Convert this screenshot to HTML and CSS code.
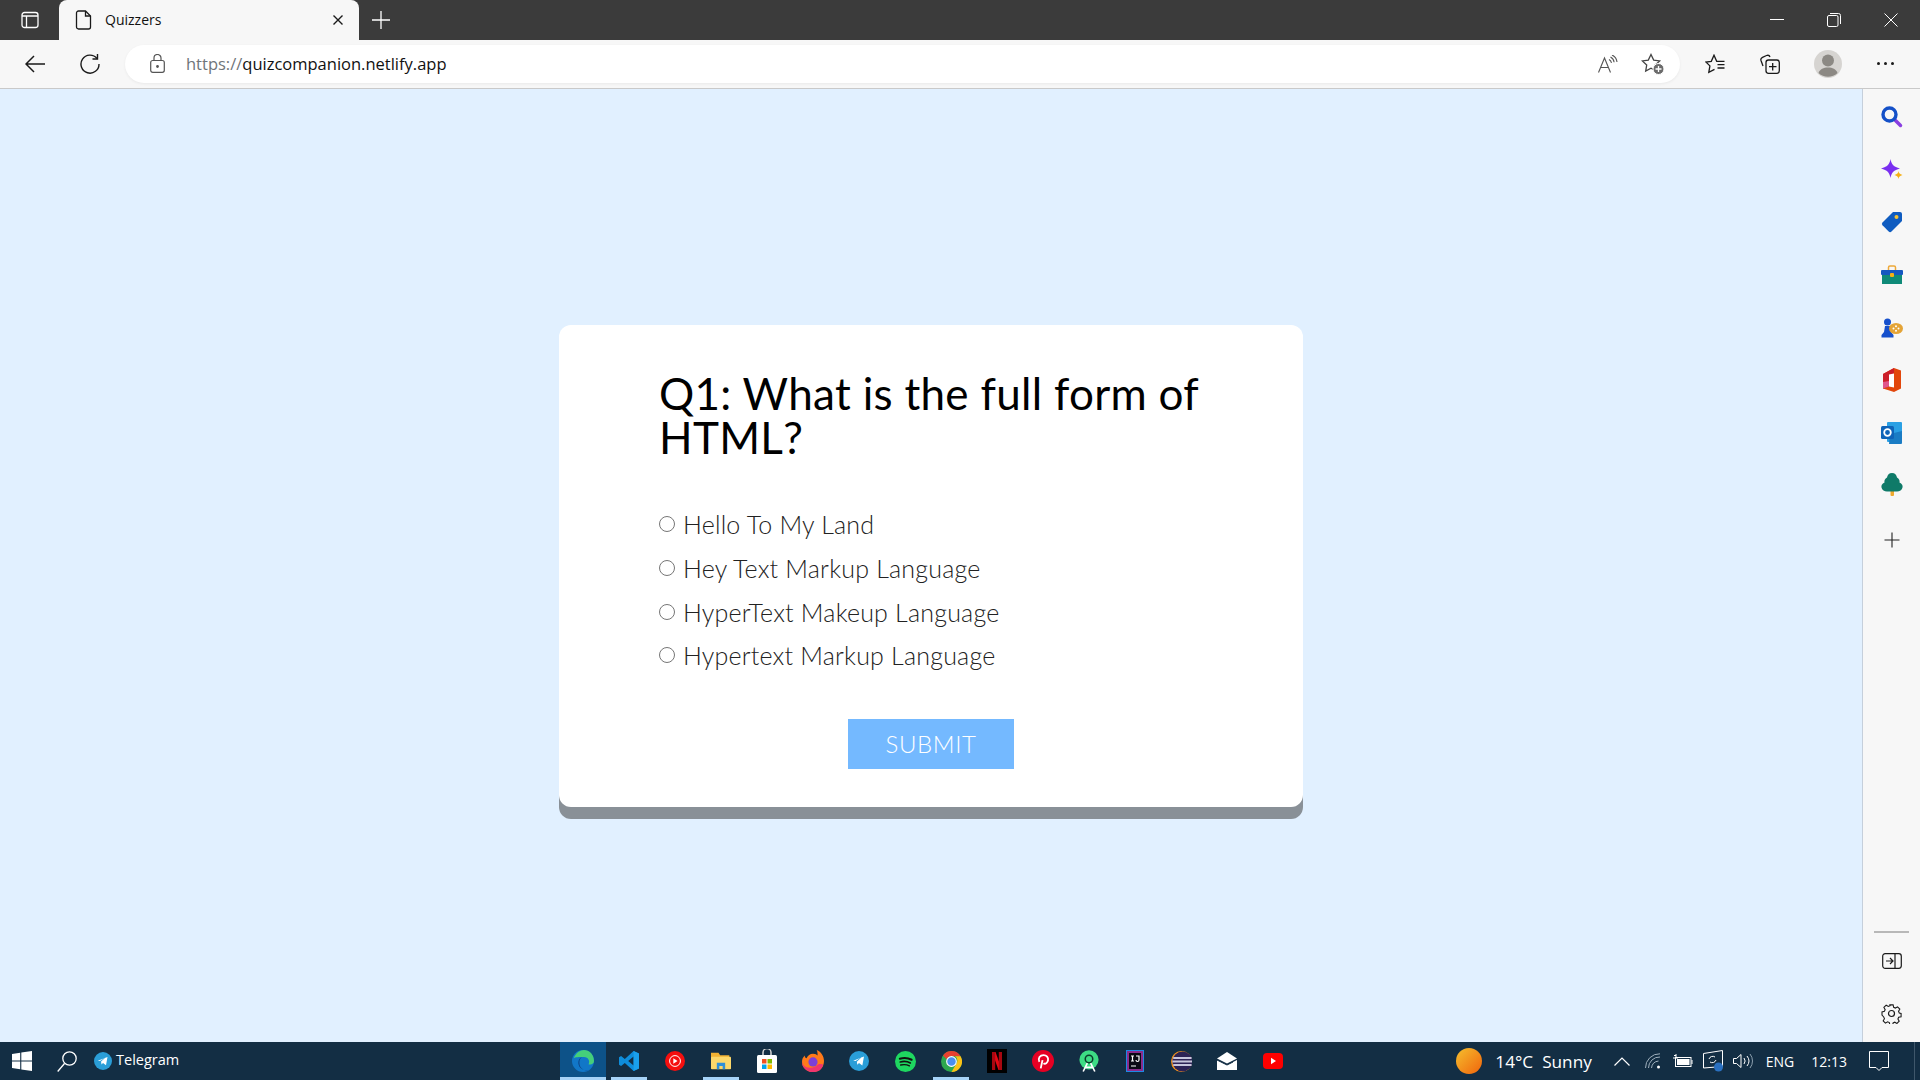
FILE: index.html
```html
<!DOCTYPE html>
<html lang="en">
<head>
  <meta charset="UTF-8" />
  <title>Quizzers</title>
  <link rel="stylesheet" href="styles.css">
</head>
<body>
  <!-- tab strip -->
  <div class="tabstrip">
    <svg class="tabs-btn" width="18" height="18" viewBox="0 0 18 18" fill="none" stroke="#fff" stroke-width="1.3"><rect x="1" y="1.5" width="16" height="15" rx="2.5"/><path d="M1 5h16M5.5 5v11.5"/></svg>
    <div class="tab">
      <svg width="18" height="20" viewBox="0 0 18 20" fill="none" stroke="#1a1a1a" stroke-width="1.3"><path d="M3.5 1h7l5 5v11a2 2 0 0 1-2 2h-10a2 2 0 0 1-2-2V3a2 2 0 0 1 2-2z"/><path d="M10.5 1v5h5"/></svg>
      <span class="tab-title">Quizzers</span>
      <svg class="tab-close" width="12" height="12" viewBox="0 0 12 12" stroke="#1a1a1a" stroke-width="1.4"><path d="M1.5 1.5l9 9M10.5 1.5l-9 9"/></svg>
    </div>
    <svg class="new-tab" width="18" height="18" viewBox="0 0 18 18" stroke="#fff" stroke-width="1.3"><path d="M9 0v18M0 9h18"/></svg>
    <div class="win-controls">
      <svg width="14" height="14" viewBox="0 0 14 14" stroke="#fff" stroke-width="1"><path d="M0 6.500h14"/></svg>
      <svg width="14" height="14" viewBox="0 0 14 14" fill="none" stroke="#fff" stroke-width="1"><rect x=".5" y="2.5" width="10.5" height="11" rx="1.5"/><path d="M3 .5h8.5a2 2 0 0 1 2 2V11"/></svg>
      <svg width="14" height="14" viewBox="0 0 14 14" stroke="#fff" stroke-width="1"><path d="M.5.5l13 13M13.5.5l-13 13"/></svg>
    </div>
  </div>

  <!-- toolbar -->
  <div class="toolbar">
    <svg class="tb-back" width="20" height="18" viewBox="0 0 20 18" fill="none" stroke="#1a1a1a" stroke-width="1.5"><path d="M20 9H1.2M9 1L1 9l8 8"/></svg>
    <svg class="tb-reload" width="20" height="20" viewBox="0 0 20 20" fill="none" stroke="#1a1a1a" stroke-width="1.4"><path d="M17 4.5A9 9 0 1 0 19 10"/><path d="M17.5 0v5h-5"/></svg>
    <div class="address">
      <svg class="lock" width="15" height="19" viewBox="0 0 15 19" fill="none" stroke="#555" stroke-width="1.2"><rect x=".7" y="6.5" width="13.6" height="11.8" rx="2"/><path d="M4 6.5V4a3.5 3.5 0 0 1 7 0v2.5"/><circle cx="7.5" cy="12.5" r=".8" fill="#555"/></svg>
      <span class="url"><span class="url-scheme">https://</span>quizcompanion.netlify.app</span>
      <svg class="read-aloud" width="20" height="18" viewBox="0 0 20 18" fill="none" stroke="#555" stroke-width="1.1"><path d="M.5 17.500L6.500 3l6 14.500M2.500 12.500h8"/><path d="M11 4.500c1.400.7 2.200 1.800 2.500 3.300M12.500 2c2 1 3.300 2.800 3.600 5.300M14 0c2.800 1.300 4.600 3.800 5 7"/></svg>
      <svg class="fav-add" width="24" height="22" viewBox="0 0 24 22" fill="none" stroke="#444" stroke-width="1.3"><path d="M10 1.500l2.700 5.600 6 .8-4.400 4.200 1 6-5.300-2.900-5.300 2.900 1-6L1.300 7.900l6-.8z"/><circle cx="17.500" cy="16" r="5.500" fill="#6b6b6b" stroke="#fff" stroke-width="1"/><path d="M17.500 13v6M14.500 16h6" stroke="#fff"/></svg>
    </div>
    <svg class="tb-favs" width="20" height="20" viewBox="0 0 20 20" fill="none" stroke="#1a1a1a" stroke-width="1.3"><path d="M19.500 7.300H11.700L9 1.200 6.300 7.300.9 8l4 3.900-1.100 6.400L9.500 15.300"/><path d="M12.500 10.700h7M12.500 14h7"/></svg>
    <svg class="tb-coll" width="20" height="20" viewBox="0 0 20 20" fill="none" stroke="#1a1a1a" stroke-width="1.3"><path d="M3 12L1 6.500C.5 5 1 4 2.500 3.300L6.500 1.500C8 1 9.500 1.500 10 3"/><rect x="6" y="6" width="13.300" height="13.300" rx="2.500"/><path d="M12.700 9v7.500M9 12.700h7.500"/></svg>
    <svg class="tb-avatar" width="28" height="28" viewBox="0 0 28 28"><circle cx="14" cy="14" r="14" fill="#d6d4d1"/><circle cx="14" cy="10.500" r="6" fill="#8c8984"/><path d="M4.500 23c1.500-4 5-5.500 9.500-5.500s8 1.500 9.500 5.500a14 14 0 0 1-19 0z" fill="#8c8984"/></svg>
    <div class="tb-dots"><i></i><i></i><i></i></div>
  </div>

  <div class="middle">
    <main class="page">
      <div class="quiz-card">
        <div class="quiz-text">
          <h2 class="question">Q1: What is the full form of HTML?</h2>
          <ul class="answers">
            <li><label class="answer"><input type="radio" name="answer" />Hello To My Land</label></li>
            <li><label class="answer"><input type="radio" name="answer" />Hey Text Markup Language</label></li>
            <li><label class="answer"><input type="radio" name="answer" />HyperText Makeup Language</label></li>
            <li><label class="answer"><input type="radio" name="answer" />Hypertext Markup Language</label></li>
          </ul>
        </div>
        <button class="submit">SUBMIT</button>
      </div>
    </main>

    <!-- edge sidebar -->
    <aside class="sidebar">
      <div class="sb-apps">
        <svg width="22" height="22" viewBox="0 0 22 22" fill="none"><path d="M13.500 13.500l6 6" stroke="#8a3fe0" stroke-width="3.500" stroke-linecap="round"/><circle cx="8.500" cy="8.500" r="6.500" stroke="#1450c8" stroke-width="3.400"/></svg>
        <svg width="22" height="22" viewBox="0 0 22 22"><path d="M9.500 0c1 5.500 3.200 7.800 9.500 9.500-6.300 1.700-8.500 4-9.500 9.500C8.500 13.500 6.300 11.200 0 9.500 6.300 7.800 8.500 5.500 9.500 0z" fill="#7a2ff0"/><path d="M17.500 12c.4 2.300 1.200 3.200 4 4-2.800.8-3.600 1.700-4 4-.4-2.300-1.200-3.200-4-4 2.800-.8 3.600-1.700 4-4z" fill="#f5b015"/></svg>
        <svg width="22" height="22" viewBox="0 0 22 22"><path d="M12 1h7a2 2 0 0 1 2 2v7L10.500 20.500a2 2 0 0 1-2.800 0L1.500 14.300a2 2 0 0 1 0-2.800z" fill="#0f5cc0"/><circle cx="15.500" cy="6" r="2" fill="#f7c331"/></svg>
        <svg width="22" height="20" viewBox="0 0 22 20"><path d="M7.500 5V2.500A1.500 1.500 0 0 1 9 1h4a1.500 1.500 0 0 1 1.500 1.500V5" fill="none" stroke="#eda93a" stroke-width="1.500"/><rect x="1" y="9" width="20" height="10" fill="#0f8a78"/><rect y="5" width="22" height="5" rx="1" fill="#1558c0"/><rect x="9" y="8" width="4" height="4" rx="1" fill="#f5b015"/></svg>
        <svg width="22" height="20" viewBox="0 0 22 20"><circle cx="6.500" cy="4" r="3.500" fill="#1650cc"/><path d="M4 8h5l1 6 2.500 3v2.500H.5V17L3 14z" fill="#1650cc"/><ellipse cx="15" cy="10.500" rx="7" ry="5.500" fill="#e4a437"/><circle cx="12.500" cy="10.500" r="1" fill="#fff"/><circle cx="15" cy="8.300" r="1" fill="#fff"/><circle cx="17.500" cy="10.500" r="1" fill="#fff"/><circle cx="15" cy="12.700" r="1" fill="#fff"/></svg>
        <svg width="20" height="24" viewBox="0 0 20 24"><path d="M12 0l7 2.500v18L12 24l-11-3.500V6z" fill="#e2470c"/><path d="M12 0L1 6v14.500l6-2V7l5-1.500z" fill="#cc1f2a"/><path d="M1 14l6-1v5.500l-6 2z" fill="#e0568c"/><path d="M7 6.500l5-1v14l-5-1z" fill="#fff"/></svg>
        <svg width="22" height="22" viewBox="0 0 22 22"><rect x="6" y="0" width="15" height="20" rx="1" fill="#2aa0e4"/><path d="M9 12l12-3v12a1 1 0 0 1-1 1H8z" fill="#1a7cc4"/><rect y="4" width="13" height="13" rx="1.500" fill="#0f64b8"/><circle cx="6.500" cy="10.500" r="3.300" fill="none" stroke="#fff" stroke-width="1.800"/></svg>
        <svg width="22" height="24" viewBox="0 0 22 24"><rect x="9.500" y="17" width="3.500" height="6" rx="1" fill="#f0a92e"/><path d="M11 0c3 0 4.500 2 5 4.500 2 1 3 3 2.500 5 2.500 1 3.500 3 3 5-.5 2.500-3 4-5.500 4H6c-2.500 0-5-1.500-5.500-4-.5-2 .5-4 3-5C3 7.500 4 5.500 6 4.500 6.500 2 8 0 11 0z" fill="#0f7a68"/></svg>
        <svg class="sb-plus" width="16" height="16" viewBox="0 0 16 16" stroke="#222" stroke-width="1.100"><path d="M8 .5v15M.5 8h15"/></svg>
      </div>
      <div class="sb-bottom">
        <div class="sb-rule"></div>
        <svg class="sb-panel" width="20" height="16" viewBox="0 0 20 16" fill="none" stroke="#1a1a1a" stroke-width="1.200"><rect x=".7" y=".7" width="18.600" height="14.600" rx="2.500"/><path d="M13 .7v14.600M4 8h6.500M8 5l3 3-3 3"/></svg>
        <svg class="sb-gear" width="21" height="21" viewBox="0 0 21 21" fill="none" stroke="#1a1a1a" stroke-width="1.200"><circle cx="10.500" cy="10.500" r="3"/><path d="M8.700 1h3.600l.6 2.700 1.900.8 2.400-1.400 2.500 2.500-1.400 2.400.8 1.900 2 .6v3.600l-2.700.6-.8 1.900 1.400 2.400-2.500 2.500-2.400-1.400-1.800.8-.6 2.300H8.700l-.6-2.700-1.900-.8-2.400 1.400-2.500-2.500 1.400-2.400-.8-1.900L0 12.300V8.700l2.700-.6.800-1.900-1.400-2.400 2.500-2.500 2.400 1.400 1.900-.8z" transform="translate(1 1) scale(.905)"/></svg>
      </div>
    </aside>
  </div>

  <!-- windows taskbar -->
  <footer class="taskbar">
    <svg class="start" width="20" height="20" viewBox="0 0 20 20" fill="#fff"><path d="M0 3l8.200-1.200v7.700H0zM9.300 1.600L20 0v9.500H9.300zM0 10.600h8.200v7.700L0 17zM9.300 10.600H20V20L9.300 18.500z"/></svg>
    <svg class="search" width="20" height="21" viewBox="0 0 20 21" fill="none" stroke="#fff" stroke-width="1.300"><circle cx="12.500" cy="7.500" r="6.700"/><path d="M7.500 12.500L.7 20.500"/></svg>
    <svg class="tg-pin" width="18" height="18" viewBox="0 0 24 24"><use href="#tg"/></svg>
    <span class="tg-label">Telegram</span>

    <div class="apps">
      <div class="app app-active">
        <svg width="22" height="22" viewBox="0 0 24 24"><circle cx="12" cy="12" r="12" fill="#1177c8"/><path d="M2 9C4 3 9 0 13 0c6 0 11 5 11 12 0 3-3 4.500-6 3.500 2-3 0-8-5-8-5 0-10 0-11 1.500z" fill="#45cf7a"/><path d="M11 8c-4 1-5 6-3 10 2 3 6 5 10 4-6 1-10-3-10-8 0-3 1-5 3-6z" fill="#0c3f80"/></svg>
      </div>
      <div class="app app-open">
        <svg width="20" height="22" viewBox="0 0 24 24"><path d="M17.500 0L24 3v18l-6.500 3L7 14.500 2.500 18 0 16.500V7.500L2.500 6 7 9.500zM17.500 6.500L11 12l6.500 5.500z" fill="#0e8ddb"/><path d="M17.500 0L24 3v18l-6.500 3z" fill="#1aa0ec"/></svg>
      </div>
      <div class="app">
        <svg width="20" height="20" viewBox="0 0 24 24"><circle cx="12" cy="12" r="12" fill="#f50f0f"/><circle cx="12" cy="12" r="6.500" fill="none" stroke="#fff" stroke-width="1.200"/><path d="M10 8.800v6.400l5-3.200z" fill="#fff"/></svg>
      </div>
      <div class="app app-open">
        <svg width="20" height="20" viewBox="0 0 24 24"><path d="M0 2h9l2 3h11v4H0z" fill="#f2b233"/><rect y="7" width="24" height="15" rx="1" fill="#fbd76a"/><path d="M7 14h10v8h-3v-4h-4v4H7z" fill="#2e8fd8"/></svg>
      </div>
      <div class="app">
        <svg width="20" height="24" viewBox="0 0 20 24"><path d="M6 7V3.500a4 4 0 0 1 8 0V7" fill="none" stroke="#d8d8d8" stroke-width="1.500"/><rect y="6" width="20" height="18" rx="1.500" fill="#fff"/><rect x="5" y="10" width="4.500" height="4.500" fill="#f25022"/><rect x="10.500" y="10" width="4.500" height="4.500" fill="#7fba00"/><rect x="5" y="15.500" width="4.500" height="4.500" fill="#00a4ef"/><rect x="10.500" y="15.500" width="4.500" height="4.500" fill="#ffb900"/></svg>
      </div>
      <div class="app">
        <svg width="22" height="24" viewBox="0 0 24 24"><path d="M12 24C5 24 0 19 0 13c0-3 1-5 3-7 0 2 1 3 2 3 1-3 4-5 7-5 3 0 4 1 5 2 0-2 0-4-1-6 5 2 8 7 8 12 0 7-5 12-12 12z" fill="#ff7a1a"/><path d="M12 24C5 24 0 19 0 13c1 4 4 6 7 6 3 1 7 0 9-2 3-3 7-1 7-1-1 5-5 8-11 8z" fill="#f0356e"/><circle cx="12" cy="13" r="5" fill="#7d3fd8"/></svg>
      </div>
      <div class="app">
        <svg width="20" height="20" viewBox="0 0 24 24"><symbol id="tg" viewBox="0 0 24 24"><circle cx="12" cy="12" r="12" fill="#2a9ed8"/><path d="M5 11.800L18 6.500l-2 11-4-3-2 2-.6-3.700 6-5.500-7.500 4.700z" fill="#fff"/></symbol><use href="#tg"/></svg>
      </div>
      <div class="app">
        <svg width="21" height="21" viewBox="0 0 24 24" fill="none" stroke="#111" stroke-linecap="round"><circle cx="12" cy="12" r="12" fill="#1ed760" stroke="none"/><path d="M5.500 8.800c4.500-1.300 9.500-1 13.500 1.200" stroke-width="2.300"/><path d="M6 12.500c4-1 8-.8 11.500 1.200" stroke-width="1.900"/><path d="M6.500 16c3.500-.8 7-.6 10 1" stroke-width="1.500"/></svg>
      </div>
      <div class="app app-open">
        <svg width="21" height="21" viewBox="0 0 24 24"><circle cx="12" cy="12" r="12" fill="#2da84f"/><path d="M12 0a12 12 0 0 1 10.400 6H12a6 6 0 0 0-5.500 3.500L2.300 5A12 12 0 0 1 12 0z" fill="#e8412f"/><path d="M22.400 6A12 12 0 0 1 12 24l5.200-9A6 6 0 0 0 16 6z" fill="#fbc116"/><circle cx="12" cy="12" r="5.500" fill="#4a8ef0" stroke="#fff" stroke-width="1.300"/></svg>
      </div>
      <div class="app">
        <svg width="20" height="24" viewBox="0 0 20 24"><rect width="20" height="24" fill="#000"/><path d="M5 3h3.500l6.500 18h-3.500z" fill="#e50914"/><path d="M5 3h3.200v18H5zM11.800 3H15v18h-3.200z" fill="#a80710"/></svg>
      </div>
      <div class="app">
        <svg width="22" height="22" viewBox="0 0 24 24"><circle cx="12" cy="12" r="12" fill="#e60023"/><path d="M9.500 20l2-9M8 13c-2-4 1-7.500 4.500-7.500 3.500 0 5.500 2.500 5 5.500-.5 3-3 5-5 3.500" fill="none" stroke="#fff" stroke-width="2"/></svg>
      </div>
      <div class="app">
        <svg width="20" height="23" viewBox="0 0 24 26" fill="none"><circle cx="12" cy="11" r="11.500" fill="#3ddc84"/><circle cx="12" cy="10" r="4.500" stroke="#0b3d2c" stroke-width="1.800"/><path d="M10 15L5 25M14 15l5 10M7 20h10" stroke="#fff" stroke-width="2"/></svg>
      </div>
      <div class="app">
        <svg width="18" height="22" viewBox="0 0 18 22"><rect width="18" height="22" fill="#1e88e5"/><rect x="1" y="1" width="16" height="20" fill="#8a2c8c"/><rect x="3" y="3" width="12" height="16" fill="#0a0a14"/><path d="M5 6h3M6.500 6v5M5 11h3M10 6h3v4a1.500 1.500 0 0 1-3 0M5 16h5" fill="none" stroke="#fff" stroke-width="1.200"/></svg>
      </div>
      <div class="app">
        <svg width="21" height="21" viewBox="0 0 24 24"><circle cx="12" cy="12" r="12" fill="#f7941e"/><circle cx="13" cy="12" r="11.500" fill="#2c2255"/><path d="M2.500 8h21M1.500 12h23M2.500 16h21" stroke="#c7c5dc" stroke-width="2.500"/></svg>
      </div>
      <div class="app">
        <svg width="20" height="18" viewBox="0 0 20 18"><path d="M0 6.500L10 0l10 6.500-10 5z" fill="#fff"/><path d="M0 8l10 5 10-5v10H0z" fill="#fff"/><path d="M0 8l10 5 6-3" fill="none" stroke="#132e44" stroke-width="1"/></svg>
      </div>
      <div class="app">
        <svg width="20" height="16" viewBox="0 0 20 16"><rect width="20" height="16" rx="4" fill="#f00"/><path d="M8 4.800v6.400l5-3.200z" fill="#fff"/></svg>
      </div>
    </div>

    <div class="tray">
      <svg class="sun" width="26" height="26" viewBox="0 0 26 26"><defs><linearGradient id="sunFill" x1="0" y1="0" x2="1" y2="1"><stop offset="0" stop-color="#f5bf2e"/><stop offset="1" stop-color="#f0640c"/></linearGradient></defs><circle cx="13" cy="13" r="13" fill="url(#sunFill)"/></svg>
      <span class="weather">14°C&nbsp; Sunny</span>
      <svg class="tray-chevron" width="16" height="9" viewBox="0 0 16 9" fill="none" stroke="#fff" stroke-width="1.200"><path d="M.5 8.500L8 1l7.500 7.500"/></svg>
      <svg class="tray-wifi" width="16" height="16" viewBox="0 0 16 16" fill="none" stroke="#9fb0bd" stroke-width="1"><path d="M.5 15A14 14 0 0 1 15 .8M3.500 15A11 11 0 0 1 15 4M6.500 15a8 8 0 0 1 7-7"/><circle cx="13.500" cy="14" r="1.500" fill="#fff" stroke="none"/></svg>
      <svg class="tray-battery" width="20" height="14" viewBox="0 0 20 14" fill="none" stroke="#fff"><path d="M1 1.500h2M3 0v4M0 4h5M2.500 4v3"/><rect x="2.500" y="3.500" width="15.500" height="9"/><rect x="4" y="5" width="12.500" height="6" fill="#fff" stroke="none"/><path d="M19 6v4"/></svg>
      <svg class="tray-display" width="20" height="22" viewBox="0 0 20 22" fill="none" stroke="#fff"><path d="M.5 3.500L19.500.5v16L.5 18z"/><path d="M6 9a4 4 0 0 1 6-2M13 10a4 4 0 0 1-6 2" /><circle cx="15.500" cy="17" r="4.500" fill="#2a70c0" stroke="none"/></svg>
      <svg class="tray-speaker" width="20" height="16" viewBox="0 0 20 16" fill="none" stroke="#fff"><path d="M.5 5.500h3L8 1.500v13l-4.500-4h-3z"/><path d="M11 5a5 5 0 0 1 0 6"/><path d="M14 3a8 8 0 0 1 0 10" /><path d="M17 1a11 11 0 0 1 0 14" stroke="#8da0ae"/></svg>
      <span class="tray-text tray-lang">ENG</span>
      <span class="tray-text tray-time">12:13</span>
      <svg class="tray-notes" width="20" height="20" viewBox="0 0 20 20" fill="none" stroke="#fff"><path d="M.5.500h19v16h-6.500L10 19.500 7 16.500H.5z"/></svg>
      <div class="show-desktop"></div>
    </div>
  </footer>
</body>
</html>
```

FILE: styles.css
```css
* { box-sizing: border-box; }
html, body { height: 100%; }
body {
  margin: 0;
  display: flex;
  flex-direction: column;
  height: 100vh;
  overflow: hidden;
  font-family: "Open Sans", sans-serif;
  background: #e1f0ff;
}
svg { display: block; flex: none; }

/* tab strip */
.tabstrip {
  height: 40px;
  display: flex;
  align-items: center;
  background: #3b3b3b;
  flex: none;
}
.tabs-btn { margin: 0 20px 0 21px; }
.tab {
  width: 300px;
  height: 40px;
  display: flex;
  align-items: center;
  padding: 0 15px 0 16px;
  background: #f7f7f7;
  border-radius: 8px 8px 0 0;
}
.tab-title { margin-left: 12px; font-size: 14px; color: #111; padding-bottom: 2px; }
.tab-close { margin-left: auto; }
.new-tab { margin-left: 13px; }
.win-controls {
  margin-left: auto;
  display: flex;
  gap: 43px;
  padding-right: 22px;
}

/* toolbar */
.toolbar {
  height: 49px;
  padding-bottom: 1px;
  display: flex;
  align-items: center;
  background: #f7f7f7;
  border-bottom: 1px solid #c9c9c9;
  flex: none;
}
.tb-back { margin-left: 25px; }
.tb-reload { margin-left: 35px; }
.address {
  width: 1555px;
  height: 38px;
  margin-left: 25px;
  display: flex;
  align-items: center;
  padding-left: 25px;
  background: #fff;
  border-radius: 19px;
  box-shadow: 0 1px 3px rgba(0,0,0,0.06);
}
.url { margin-left: 21px; font-size: 16.5px; color: #111; }
.url-scheme { color: #70757a; }
.read-aloud { margin-left: auto; }
.fav-add { margin: 0 15px 0 23px; }
.tb-favs { margin-left: 25px; }
.tb-coll { margin-left: 35px; }
.tb-avatar { margin-left: 34px; }
.tb-dots { margin-left: 35px; display: flex; gap: 4px; }
.tb-dots i { width: 3px; height: 3px; border-radius: 50%; background: #1a1a1a; }

/* page */
.middle { flex: 1; display: flex; min-height: 0; }
.page {
  flex: 1;
  display: flex;
  align-items: center;
  justify-content: center;
  background: #e1f0ff;
}
.quiz-card {
  width: 744px;
  height: 482px;
  padding-top: 46px;
  background: #fff;
  border-radius: 12px;
  box-shadow: 0 12px 0 #899097;
  font-family: "Lato", sans-serif;
}
.quiz-text { padding: 0 78px 0 100px; }
.question {
  margin: 0;
  font-size: 44px;
  line-height: 44px;
  font-weight: 400;
  letter-spacing: 0.3px;
  color: #000;
}
.answers { list-style: none; margin: 44px 0 0; padding: 0; }
.answers li { height: 43.7px; display: flex; align-items: center; }
.answer {
  display: flex;
  align-items: center;
  font-size: 25px;
  font-weight: 300;
  letter-spacing: 0.2px;
  color: #222;
}
.answer input {
  width: 16px;
  height: 16px;
  margin: 0 8px 0 0;
}
.submit {
  display: block;
  width: 166px;
  height: 50px;
  margin: 42px auto 0;
  padding-bottom: 3px;
  border: none;
  background: #74b9ff;
  color: #fff;
  font-family: "Lato", sans-serif;
  font-size: 24px;
  font-weight: 300;
  letter-spacing: 0.6px;
}

/* sidebar */
.sidebar {
  width: 58px;
  display: flex;
  flex-direction: column;
  padding: 2px 0 18px;
  background: #f7f7f7;
  border-left: 1px solid #c5cfdb;
  flex: none;
}
.sb-apps {
  display: grid;
  grid-auto-rows: 52.6px;
  justify-items: center;
  align-items: center;
}
.sb-plus { margin-top: 3px; }
.sb-bottom {
  margin-top: auto;
  display: flex;
  flex-direction: column;
  align-items: center;
}
.sb-rule { width: 35px; height: 2px; background: #b8b8b8; }
.sb-panel { margin-top: 20px; }
.sb-gear { margin-top: 34px; }

/* taskbar */
.taskbar {
  height: 38px;
  display: flex;
  align-items: center;
  background: #132e44;
  color: #fff;
  flex: none;
}
.start { margin-left: 12px; }
.search { margin-left: 25px; }
.tg-pin { margin-left: 17px; }
.tg-label { margin-left: 4px; font-size: 14.5px; padding-bottom: 3px; }
.apps { margin-left: 381px; display: flex; height: 100%; }
.app {
  width: 46px;
  height: 100%;
  display: flex;
  align-items: center;
  justify-content: center;
  position: relative;
}
.app-active { background: #0d5288; }
.app-active::after, .app-open::after {
  content: "";
  position: absolute;
  bottom: 0;
  left: 5px;
  right: 5px;
  height: 3px;
  background: #a6d3f8;
}
.app-active::after { left: 0; right: 0; }
.tray { margin-left: auto; display: flex; align-items: center; height: 100%; }
.weather { margin-left: 13px; font-size: 17.2px; white-space: nowrap; }
.tray-chevron { margin-left: 22px; }
.tray-wifi { margin-left: 15px; }
.tray-battery { margin-left: 12px; }
.tray-display { margin-left: 10px; }
.tray-speaker { margin-left: 10px; }
.tray-text { font-size: 14px; }
.tray-lang { margin-left: 13px; }
.tray-time { margin-left: 17px; }
.tray-notes { margin-left: 22px; }
.show-desktop {
  width: 1px;
  height: 100%;
  margin: 0 5px 0 25px;
  background: #3f576b;
}
```
